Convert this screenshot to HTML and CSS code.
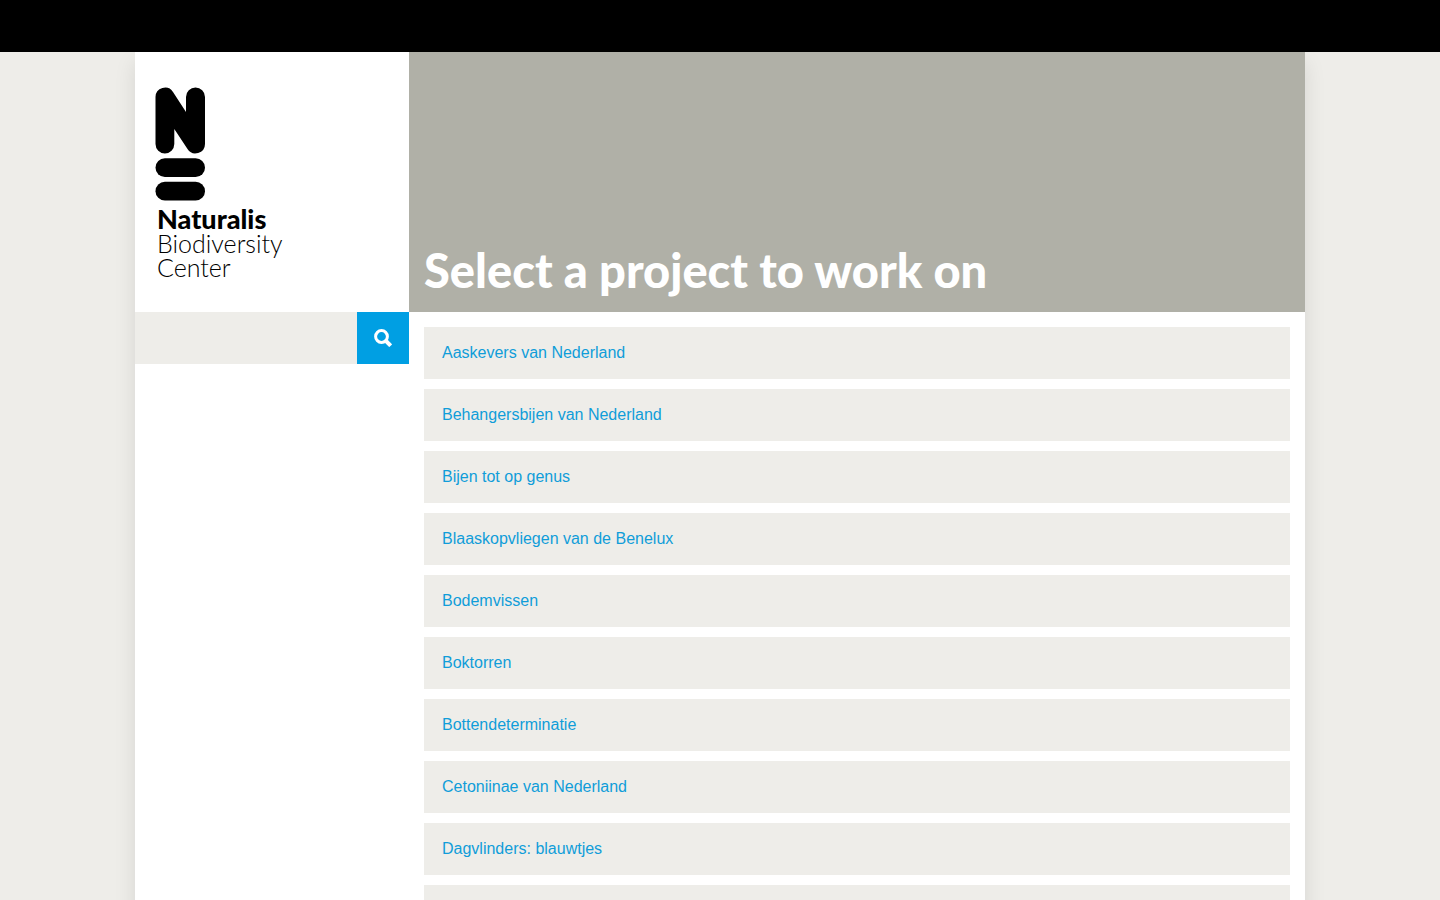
FILE: index.html
```html
<!DOCTYPE html>
<html lang="en">
<head>
<meta charset="utf-8">
<meta name="viewport" content="width=device-width, initial-scale=1">
<title>Select a project to work on</title>
<link rel="stylesheet" href="styles.css">
</head>
<body>
<div class="topbar"></div>
<div class="container">
  <aside class="sidebar">
    <a class="logo" href="#">
      <svg class="logo-mark" viewBox="0 0 50 114" aria-hidden="true">
        <path d="M.5 10A9.500 9.500 0 0 1 18 5L31 25V10A9.500 9.500 0 0 1 50 10V57A9.500 9.500 0 0 1 32.500 62L19.300 42V57A9.400 9.400 0 0 1 .5 57Z"/>
        <rect x=".5" y="71.300" width="49.500" height="18.700" rx="9.350"/>
        <rect x=".5" y="94.800" width="49.500" height="18.800" rx="9.400"/>
      </svg>
      <span class="logo-text">
        <span class="logo-name">Naturalis</span>
        <span class="logo-sub">Biodiversity</span>
        <span class="logo-sub">Center</span>
      </span>
    </a>
    <form class="search">
      <input class="search-input" type="text" aria-label="Search">
      <button class="search-button" type="submit" aria-label="Search">
        <svg class="search-icon" viewBox="0 0 18 18" aria-hidden="true">
          <circle cx="7.500" cy="7.500" r="5.900"/>
          <path class="search-handle" d="M11.500 11.500L16.700 16.700"/>
        </svg>
      </button>
    </form>
  </aside>
  <main class="main">
    <header class="banner">
      <h1 class="title">Select a project to work on</h1>
    </header>
    <ul class="projects">
      <li><a class="project" href="#">Aaskevers van Nederland</a></li>
      <li><a class="project" href="#">Behangersbijen van Nederland</a></li>
      <li><a class="project" href="#">Bijen tot op genus</a></li>
      <li><a class="project" href="#">Blaaskopvliegen van de Benelux</a></li>
      <li><a class="project" href="#">Bodemvissen</a></li>
      <li><a class="project" href="#">Boktorren</a></li>
      <li><a class="project" href="#">Bottendeterminatie</a></li>
      <li><a class="project" href="#">Cetoniinae van Nederland</a></li>
      <li><a class="project" href="#">Dagvlinders: blauwtjes</a></li>
      <li class="project"></li>
    </ul>
  </main>
</div>
</body>
</html>
```
FILE: styles.css
```css
* {
  box-sizing: border-box;
}

body {
  margin: 0;
  background: #eeede9;
  font: 16px/20px "Liberation Sans", Arial, sans-serif;
}

.topbar {
  position: relative;
  z-index: 1;
  height: 52px;
  background: #000;
}

.container {
  display: flex;
  max-width: 1170px;
  min-height: calc(100vh - 52px);
  margin: 0 auto;
  background: #fff;
  box-shadow: 0 10px 20px rgba(0, 0, 0, 0.1);
}

.sidebar {
  flex: 0 0 274px;
  min-width: 0;
}

.logo {
  display: block;
  min-height: 260px;
  padding: 35px 20px 0;
  color: #000;
  text-decoration: none;
}

.logo-mark {
  display: block;
  width: 50px;
  height: 114px;
}

.logo-text {
  display: flex;
  flex-direction: column;
  padding: 6px 2px 0;
  font-family: Lato, sans-serif;
  line-height: 24px;
}

.logo-name {
  font-size: 27px;
  font-weight: 900;
}

.logo-sub {
  font-size: 25px;
  font-weight: 300;
}

.search {
  display: flex;
}

.search-input {
  flex: 1;
  min-width: 0;
  height: 52px;
  padding: 0 18px;
  border: 0;
  background: #eeede9;
  font: inherit;
}

.search-button {
  display: grid;
  place-items: center;
  width: 52px;
  height: 52px;
  padding: 0;
  border: 0;
  background: #009fe3;
}

.search-icon {
  width: 18px;
  height: 18px;
  fill: none;
  stroke: #fff;
  stroke-width: 3;
}

.search-handle {
  stroke-width: 4;
}

.main {
  flex: 1;
  min-width: 0;
}

.banner {
  display: flex;
  align-items: flex-end;
  min-height: 260px;
  padding: 14px 15px;
  background: #b0b0a7;
}

.title {
  margin: 0;
  color: #fff;
  font: 900 47px/56px Lato, sans-serif;
}

.projects {
  display: grid;
  gap: 10px;
  margin: 0;
  padding: 15px;
  list-style: none;
}

.project {
  display: block;
  min-height: 52px;
  padding: 16px 18px;
  background: #eeede9;
  color: #109dd9;
  text-decoration: none;
}
```
